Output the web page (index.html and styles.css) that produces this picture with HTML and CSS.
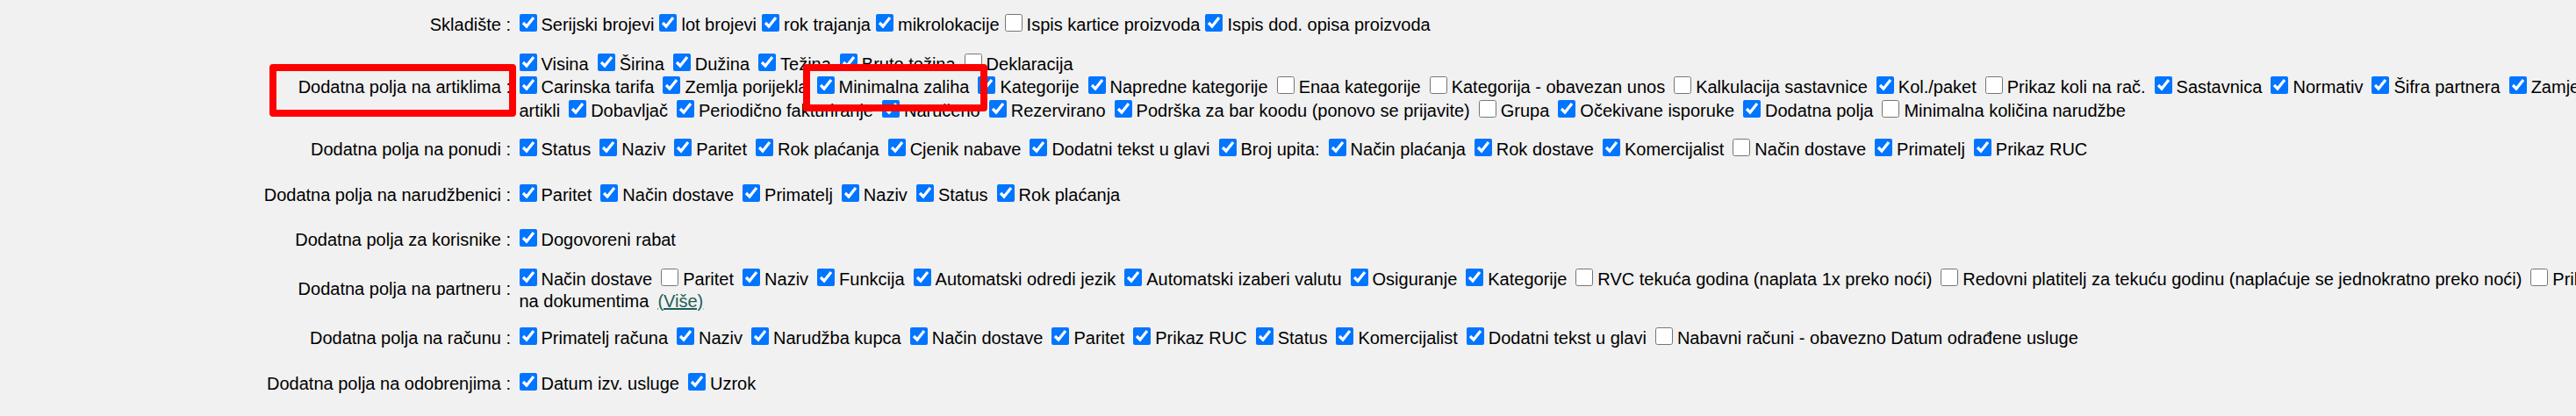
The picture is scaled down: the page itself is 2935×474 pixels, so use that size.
FILE: index.html
```html
<!DOCTYPE html>
<html lang="hr">
<head>
<meta charset="utf-8">
<title>Postavke</title>
<link rel="stylesheet" href="styles.css">
</head>
<body>
<div class="page">
  <div class="form">
    <div class="lbl">Skladište :</div>
    <div class="vals tight">
      <div class="ln">
        <label class="opt"><input type="checkbox" checked>Serijski brojevi</label>
        <label class="opt"><input type="checkbox" checked>lot brojevi</label>
        <label class="opt"><input type="checkbox" checked>rok trajanja</label>
        <label class="opt"><input type="checkbox" checked>mikrolokacije</label>
        <label class="opt"><input type="checkbox">Ispis kartice proizvoda</label>
        <label class="opt"><input type="checkbox" checked>Ispis dod. opisa proizvoda</label>
      </div>
    </div>

    <div class="lbl">Dodatna polja na artiklima :</div>
    <div class="vals">
      <div class="ln">
        <label class="opt"><input type="checkbox" checked>Visina</label>
        <label class="opt"><input type="checkbox" checked>Širina</label>
        <label class="opt"><input type="checkbox" checked>Dužina</label>
        <label class="opt"><input type="checkbox" checked>Težina</label>
        <label class="opt"><input type="checkbox" checked>Bruto težina</label>
        <label class="opt"><input type="checkbox">Deklaracija</label>
      </div>
      <div class="ln">
        <label class="opt"><input type="checkbox" checked>Carinska tarifa</label>
        <label class="opt"><input type="checkbox" checked>Zemlja porijekla</label>
        <label class="opt"><input type="checkbox" checked>Minimalna zaliha</label>
        <label class="opt"><input type="checkbox" checked>Kategorije</label>
        <label class="opt"><input type="checkbox" checked>Napredne kategorije</label>
        <label class="opt"><input type="checkbox">Enaa kategorije</label>
        <label class="opt"><input type="checkbox">Kategorija - obavezan unos</label>
        <label class="opt"><input type="checkbox">Kalkulacija sastavnice</label>
        <label class="opt"><input type="checkbox" checked>Kol./paket</label>
        <label class="opt"><input type="checkbox">Prikaz koli na rač.</label>
        <label class="opt"><input type="checkbox" checked>Sastavnica</label>
        <label class="opt"><input type="checkbox" checked>Normativ</label>
        <label class="opt"><input type="checkbox" checked>Šifra partnera</label>
        <label class="opt"><input type="checkbox" checked>Zamjenski</label>
      </div>
      <div class="ln">
        <span class="cont">artikli</span>
        <label class="opt"><input type="checkbox" checked>Dobavljač</label>
        <label class="opt"><input type="checkbox" checked>Periodično fakturiranje</label>
        <label class="opt"><input type="checkbox" checked>Naručeno</label>
        <label class="opt"><input type="checkbox" checked>Rezervirano</label>
        <label class="opt"><input type="checkbox" checked>Podrška za bar koodu (ponovo se prijavite)</label>
        <label class="opt"><input type="checkbox">Grupa</label>
        <label class="opt"><input type="checkbox" checked>Očekivane isporuke</label>
        <label class="opt"><input type="checkbox" checked>Dodatna polja</label>
        <label class="opt"><input type="checkbox">Minimalna količina narudžbe</label>
      </div>
    </div>

    <div class="lbl">Dodatna polja na ponudi :</div>
    <div class="vals">
      <div class="ln">
        <label class="opt"><input type="checkbox" checked>Status</label>
        <label class="opt"><input type="checkbox" checked>Naziv</label>
        <label class="opt"><input type="checkbox" checked>Paritet</label>
        <label class="opt"><input type="checkbox" checked>Rok plaćanja</label>
        <label class="opt"><input type="checkbox" checked>Cjenik nabave</label>
        <label class="opt"><input type="checkbox" checked>Dodatni tekst u glavi</label>
        <label class="opt"><input type="checkbox" checked>Broj upita:</label>
        <label class="opt"><input type="checkbox" checked>Način plaćanja</label>
        <label class="opt"><input type="checkbox" checked>Rok dostave</label>
        <label class="opt"><input type="checkbox" checked>Komercijalist</label>
        <label class="opt"><input type="checkbox">Način dostave</label>
        <label class="opt"><input type="checkbox" checked>Primatelj</label>
        <label class="opt"><input type="checkbox" checked>Prikaz RUC</label>
      </div>
    </div>

    <div class="lbl">Dodatna polja na narudžbenici :</div>
    <div class="vals">
      <div class="ln">
        <label class="opt"><input type="checkbox" checked>Paritet</label>
        <label class="opt"><input type="checkbox" checked>Način dostave</label>
        <label class="opt"><input type="checkbox" checked>Primatelj</label>
        <label class="opt"><input type="checkbox" checked>Naziv</label>
        <label class="opt"><input type="checkbox" checked>Status</label>
        <label class="opt"><input type="checkbox" checked>Rok plaćanja</label>
      </div>
    </div>

    <div class="lbl">Dodatna polja za korisnike :</div>
    <div class="vals">
      <div class="ln">
        <label class="opt"><input type="checkbox" checked>Dogovoreni rabat</label>
      </div>
    </div>

    <div class="lbl">Dodatna polja na partneru :</div>
    <div class="vals">
      <div class="ln">
        <label class="opt"><input type="checkbox" checked>Način dostave</label>
        <label class="opt"><input type="checkbox">Paritet</label>
        <label class="opt"><input type="checkbox" checked>Naziv</label>
        <label class="opt"><input type="checkbox" checked>Funkcija</label>
        <label class="opt"><input type="checkbox" checked>Automatski odredi jezik</label>
        <label class="opt"><input type="checkbox" checked>Automatski izaberi valutu</label>
        <label class="opt"><input type="checkbox" checked>Osiguranje</label>
        <label class="opt"><input type="checkbox" checked>Kategorije</label>
        <label class="opt"><input type="checkbox">RVC tekuća godina (naplata 1x preko noći)</label>
        <label class="opt"><input type="checkbox">Redovni platitelj za tekuću godinu (naplaćuje se jednokratno preko noći)</label>
        <label class="opt"><input type="checkbox">Prikaz kontakta</label>
      </div>
      <div class="ln txt">
        <span class="cont">na dokumentima</span>
        <a class="more" href="#">(Više)</a>
      </div>
    </div>

    <div class="lbl">Dodatna polja na računu :</div>
    <div class="vals">
      <div class="ln">
        <label class="opt"><input type="checkbox" checked>Primatelj računa</label>
        <label class="opt"><input type="checkbox" checked>Naziv</label>
        <label class="opt"><input type="checkbox" checked>Narudžba kupca</label>
        <label class="opt"><input type="checkbox" checked>Način dostave</label>
        <label class="opt"><input type="checkbox" checked>Paritet</label>
        <label class="opt"><input type="checkbox" checked>Prikaz RUC</label>
        <label class="opt"><input type="checkbox" checked>Status</label>
        <label class="opt"><input type="checkbox" checked>Komercijalist</label>
        <label class="opt"><input type="checkbox" checked>Dodatni tekst u glavi</label>
        <label class="opt"><input type="checkbox">Nabavni računi - obavezno Datum odrađene usluge</label>
      </div>
    </div>

    <div class="lbl">Dodatna polja na odobrenjima :</div>
    <div class="vals">
      <div class="ln">
        <label class="opt"><input type="checkbox" checked>Datum izv. usluge</label>
        <label class="opt"><input type="checkbox" checked>Uzrok</label>
      </div>
    </div>
  </div>

  <div class="mark mark-label"></div>
  <div class="mark mark-field"></div>
</div>
</body>
</html>
```

FILE: styles.css
```css
html {
  overflow: hidden;
}

body {
  margin: 0;
  background: #f1f1f1;
  color: #000;
  font-family: "Liberation Sans", Arial, sans-serif;
  font-size: 20px;
}

.page {
  position: relative;
  padding-top: 3px;
}

.form {
  display: grid;
  grid-template-columns: 582px max-content;
  column-gap: 9.5px;
}

.lbl {
  align-self: center;
  text-align: right;
  white-space: nowrap;
  line-height: 23px;
}

.vals {
  display: flex;
  flex-direction: column;
  justify-content: center;
  min-height: 40.5px;
  padding: 5.5px 0;
}

.ln {
  display: flex;
  align-items: center;
  height: 26.5px;
  column-gap: 10px;
  white-space: nowrap;
}

.tight .ln {
  column-gap: 6px;
}

.ln.txt {
  height: 23px;
}

.opt {
  display: inline-flex;
  align-items: center;
  line-height: 23px;
}

.opt input {
  width: 20px;
  height: 20px;
  margin: 0 5px 5px 0;
}

.cont {
  line-height: 23px;
}

.more {
  color: #1f5f52;
  text-decoration: underline;
}

.mark {
  position: absolute;
  border: 8px solid #ff0000;
  border-radius: 4px;
  box-sizing: border-box;
}

.mark-label {
  left: 307px;
  top: 73px;
  width: 281px;
  height: 60px;
}

.mark-field {
  left: 915px;
  top: 73px;
  width: 210px;
  height: 54px;
}
```
